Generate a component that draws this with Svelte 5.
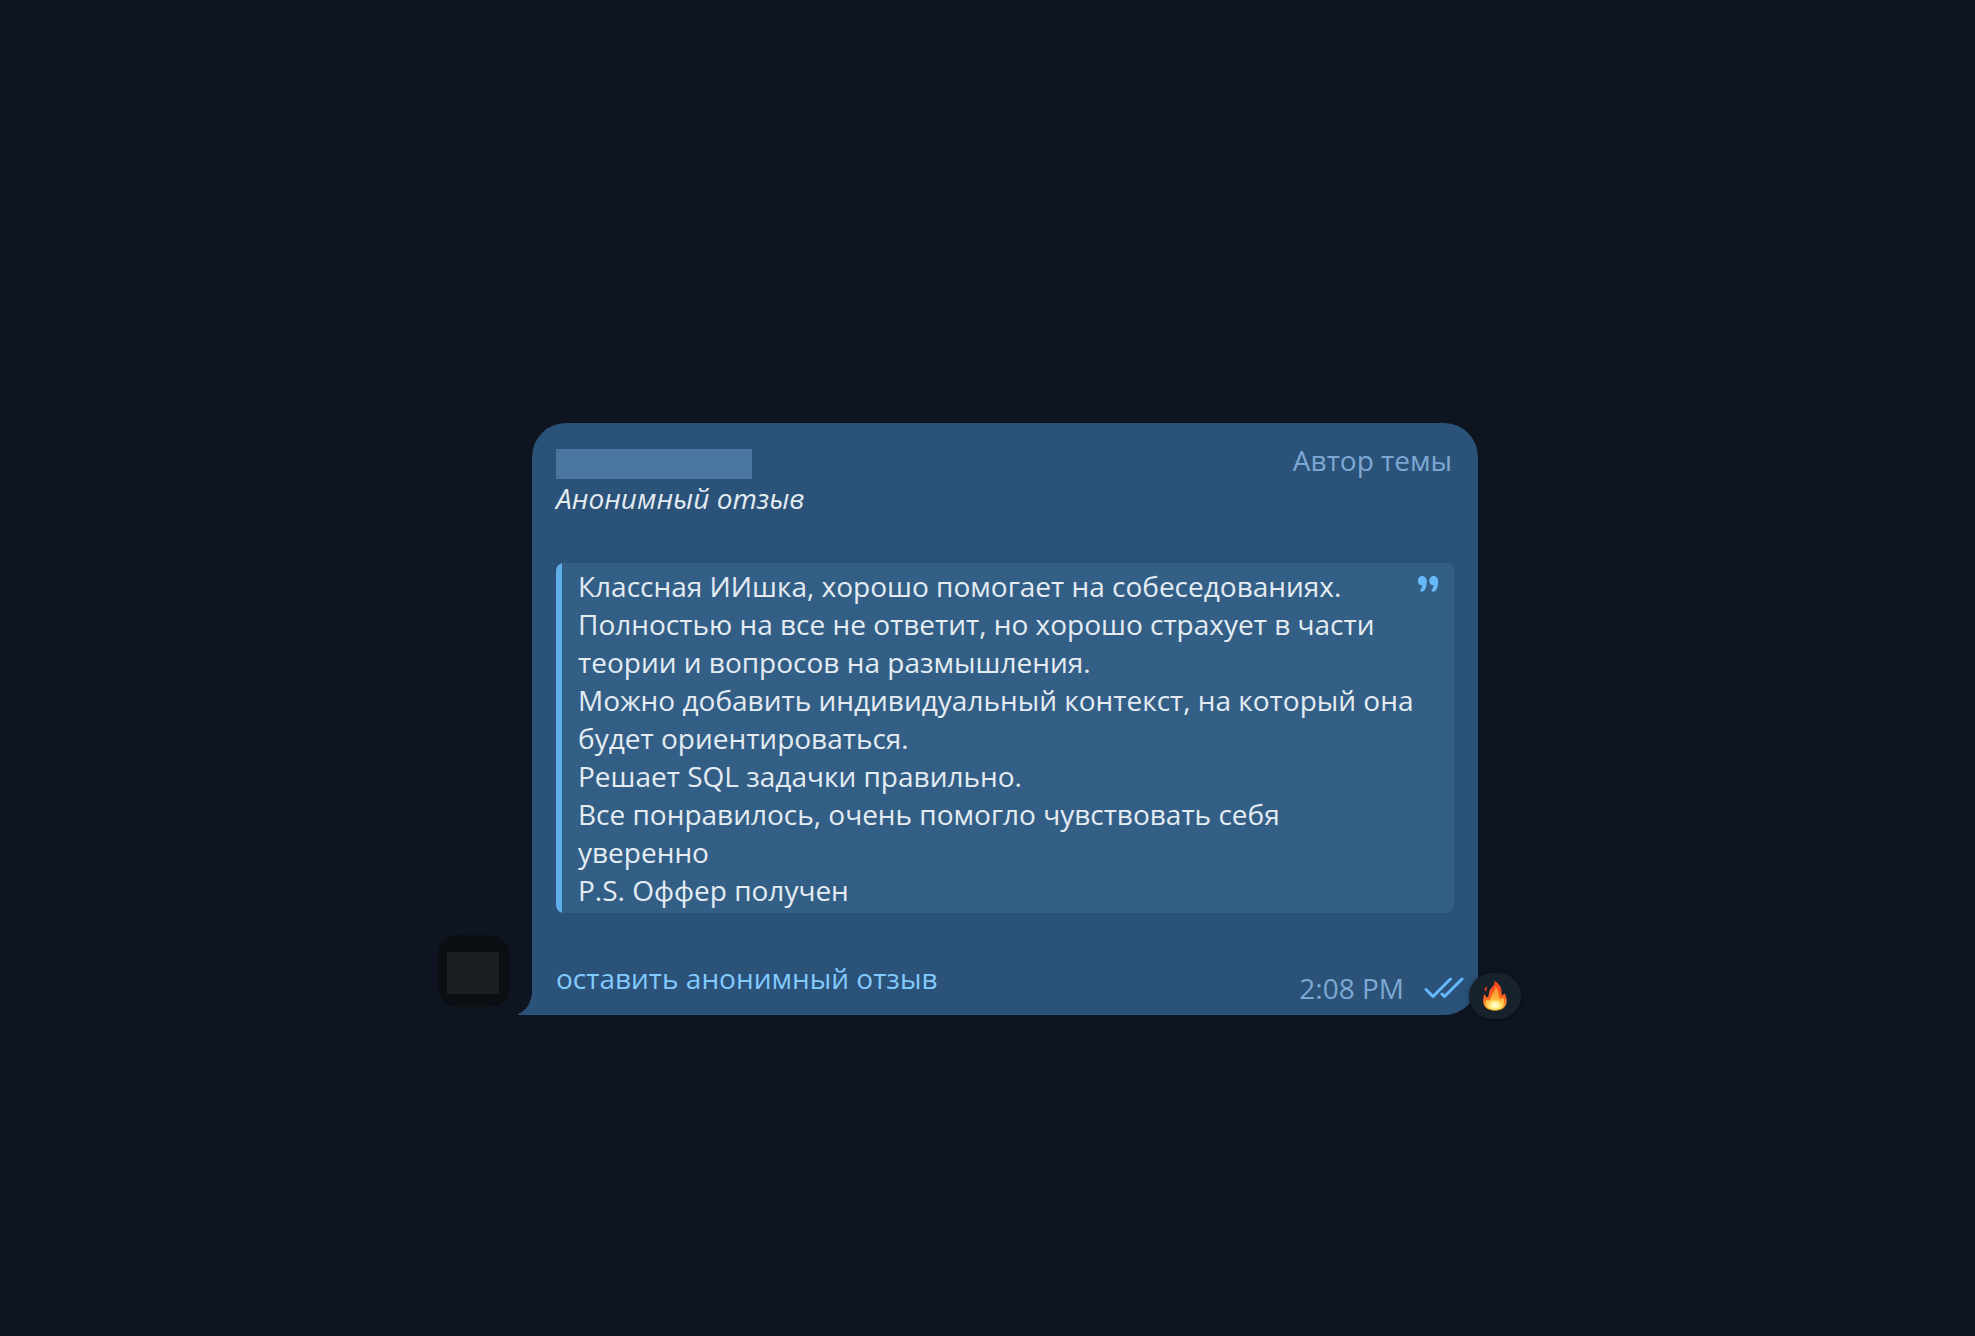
<script lang="ts">
  interface Message {
    title: string;
    role: string;
    quote: string[];
    action: string;
    time: string;
  }

  const message: Message = {
    title: 'Анонимный отзыв',
    role: 'Автор темы',
    quote: [
      'Классная ИИшка, хорошо помогает на собеседованиях.',
      'Полностью на все не ответит, но хорошо страхует в части теории и вопросов на размышления.',
      'Можно добавить индивидуальный контекст, на который она будет ориентироваться.',
      'Решает SQL задачки правильно.',
      'Все понравилось, очень помогло чувствовать себя уверенно',
      'P.S. Оффер получен',
    ],
    action: 'оставить анонимный отзыв',
    time: '2:08 PM',
  };
</script>

<main class="chat">
  <div class="row">
    <div class="avatar"><span class="avatar-cover"></span></div>

    <article class="bubble">
      <svg class="tail" width="14" height="22" viewBox="0 0 14 22" aria-hidden="true">
        <path d="M14 0C13 10 8 18 0 21V22H14Z" fill="#2b5278" />
      </svg>

      <header class="header">
        <span class="name-cover"></span>
        <span class="role">{message.role}</span>
      </header>
      <p><em>{message.title}</em></p>

      <blockquote class="quote">
        {#each message.quote as line}
          <p>{line}</p>
        {/each}
        <svg class="quote-icon" width="22" height="16" viewBox="0 0 22 16" fill="#65b9f6" aria-hidden="true">
          <path d="M5.200 0C8 0 9.800 2.200 9.800 5.800C9.800 11 7.800 15.800 4.800 15.800C3.500 15.800 2.800 14.800 3.400 13.800C4 12.900 5 12.200 5.200 9.300C2.600 9.600 .8 7.400 .8 4.800C.8 2.100 2.600 0 5.200 0Z" />
          <path d="M16.600 0C19.400 0 21.200 2.200 21.200 5.800C21.200 11 19.200 15.800 16.200 15.800C14.900 15.800 14.200 14.800 14.800 13.800C15.400 12.900 16.400 12.200 16.600 9.300C14 9.600 12.200 7.400 12.200 4.800C12.200 2.100 14 0 16.600 0Z" />
        </svg>
      </blockquote>

      <footer class="footer">
        <a class="action" href="#review">{message.action}</a>
        <div class="status">
          <time>{message.time}</time>
          <svg width="40" height="22" viewBox="0 0 40 22" aria-label="Read" role="img">
            <path
              d="M2 12.500L9 19.500L26.500 2M18 17L20.500 19.500L38 2"
              fill="none"
              stroke="#65b9ff"
              stroke-width="3"
              stroke-linecap="round"
              stroke-linejoin="round"
            />
          </svg>
        </div>
      </footer>

      <button class="reaction" aria-label="Fire">
        <svg width="26" height="32" viewBox="0 0 26 32" aria-hidden="true">
          <defs>
            <linearGradient id="flame" x1="0" y1="0" x2="0" y2="1">
              <stop offset="0" stop-color="#f4401b" />
              <stop offset="0.550" stop-color="#fb6425" />
              <stop offset="1" stop-color="#ffb52e" />
            </linearGradient>
            <linearGradient id="inner" x1="0" y1="0" x2="0" y2="1">
              <stop offset="0" stop-color="#ff8a2c" />
              <stop offset="0.600" stop-color="#ffb83b" />
              <stop offset="1" stop-color="#fff08a" />
            </linearGradient>
            <radialGradient id="core">
              <stop offset="0" stop-color="#fffce0" />
              <stop offset="0.500" stop-color="#fff39a" />
              <stop offset="1" stop-color="#ffd84a" stop-opacity="0" />
            </radialGradient>
          </defs>
          <path d="M12.500 1C17 3 19.800 7.500 19.600 12.500C19.600 14.800 20.400 15.500 21.200 14.800C21.800 14.300 22 13.600 22.200 13C24.200 15.500 25.200 19.500 24.500 23C23.500 28 19 30.500 13 30.500C7 30.500 2.300 28 1.400 23C.9 19.500 1.400 16.500 2.500 13.800C3 15.300 3.800 16.700 5 17.500C6.300 17.300 6.800 15.500 6.900 13.500C7.200 10 8.500 8.500 10.500 6.500C12 5 12.900 3.200 12.500 1Z" fill="url(#flame)" />
          <path d="M13.300 6C16.500 10 17 14 17 17C17.400 19 19.500 19.500 21.300 17.500C22.500 21 22.300 24.500 20 27.500C18 29.800 8 30 5.800 27.500C3.700 25 3.200 21.700 4.200 19.500C6 21 8.500 20.500 9 17.500C9.500 13.500 13.500 11.500 13.300 6Z" fill="url(#inner)" />
          <ellipse cx="13" cy="25" rx="8" ry="6" fill="url(#core)" />
          <path d="M4.800 6.500C5.400 8.300 5 10.300 3.300 11.300C1.900 10.100 2.300 7.900 4.800 6.500Z" fill="#e93417" />
        </svg>
      </button>
    </article>
  </div>
</main>

<style>
  :global(body) {
    margin: 0;
    background: #0e1520;
  }

  .chat {
    box-sizing: border-box;
    display: flex;
    align-items: center;
    justify-content: center;
    min-height: 100vh;
    padding-top: 102px;
    font-family: 'Open Sans', 'Noto Sans', sans-serif;
    font-size: 28px;
    line-height: 38px;
    color: #e4ecf2;
  }

  .row {
    display: flex;
    align-items: flex-end;
    gap: 22px;
    width: 100%;
    max-width: 1040px;
    padding-right: 59px;
  }

  .avatar {
    box-sizing: border-box;
    display: flex;
    flex: none;
    width: 72px;
    height: 72px;
    margin-bottom: 8px;
    padding: 17px 0 0 9px;
    border-radius: 20px;
    background: #0b0e12;
  }

  .avatar-cover {
    width: 52px;
    height: 42px;
    background: #1a1d21;
  }

  .bubble {
    position: relative;
    box-sizing: border-box;
    flex: 1;
    min-width: 0;
    padding: 18px 24px 8px;
    border-radius: 34px 34px 34px 0;
    background: #2b5278;
  }

  .tail {
    position: absolute;
    bottom: 0;
    left: -14px;
  }

  .header {
    display: flex;
    align-items: flex-start;
    justify-content: space-between;
    padding-right: 2px;
  }

  .name-cover {
    width: 196px;
    height: 30px;
    margin-top: 8px;
    background: #4a76a0;
  }

  .role {
    color: #7da8d3;
  }

  p {
    margin: 0;
  }

  .quote {
    position: relative;
    margin: 46px 0;
    padding: 4px 38px 4px 22px;
    overflow: hidden;
    border-radius: 8px;
    background: linear-gradient(to right, #5eaeea 6px, #335f87 6px);
  }

  .quote-icon {
    position: absolute;
    top: 13px;
    right: 15px;
  }

  .footer {
    display: flex;
    align-items: flex-start;
    justify-content: space-between;
    margin-right: -10px;
  }

  .action {
    color: #83caff;
    text-decoration: none;
  }

  .status {
    display: flex;
    align-items: center;
    gap: 20px;
    margin-top: 10px;
    color: #7da8d3;
  }

  .reaction {
    position: absolute;
    right: -43px;
    bottom: -4px;
    display: grid;
    place-items: center;
    width: 52px;
    height: 46px;
    padding: 0;
    border: none;
    border-radius: 23px;
    background: #18222c;
    box-shadow: 0 1px 5px rgb(0 0 0 / 0.4);
    cursor: pointer;
  }
</style>
